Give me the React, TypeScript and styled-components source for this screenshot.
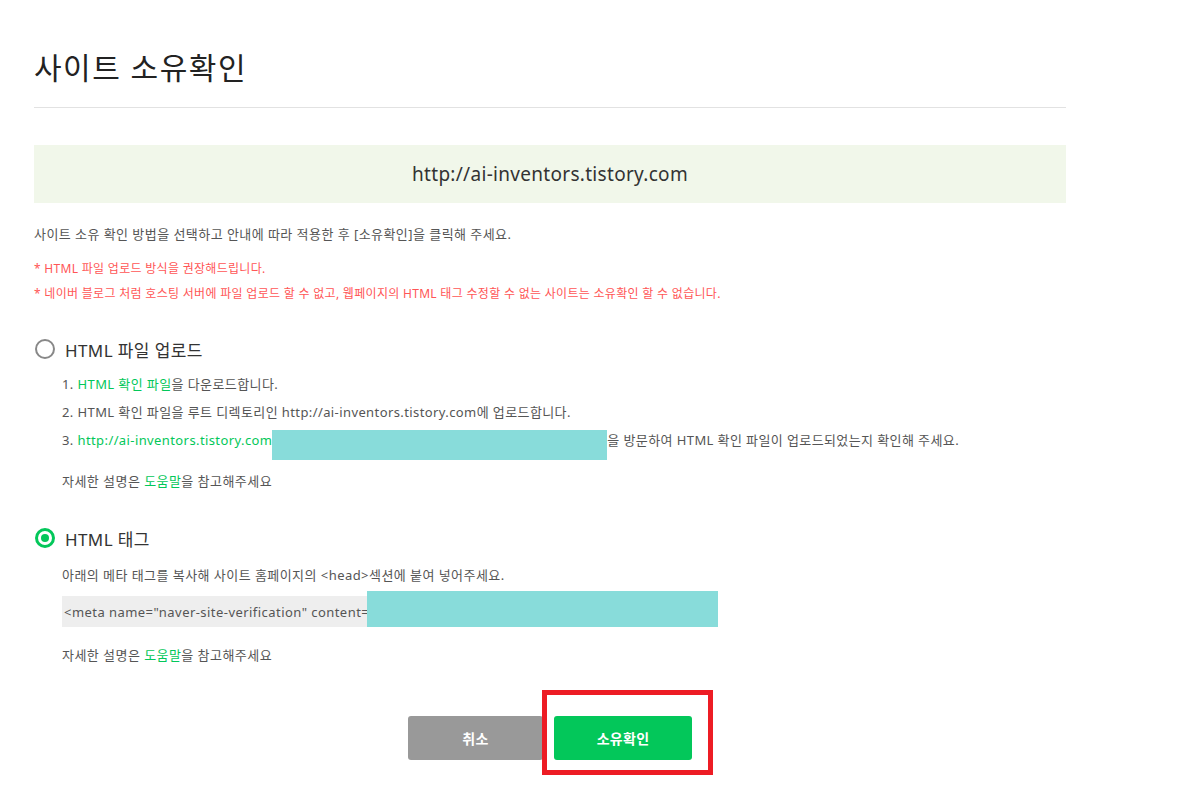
import React from "react";
import styled, { createGlobalStyle } from "styled-components";

const FONT = `"Noto Sans", "Noto Sans CJK KR", sans-serif`;

const Global = createGlobalStyle`
  html, body { margin: 0; padding: 0; background: #fff; }
  body { font-family: ${FONT}; color: #555; }
  * { box-sizing: border-box; }
`;

const Page = styled.div`
  width: 1100px;
  padding: 48px 34px 40px 34px;
`;

const Title = styled.h1`
  margin: 0;
  font-size: 30px;
  line-height: 40px;
  font-weight: 400;
  color: #222;
  letter-spacing: 1.5px;
  padding-bottom: 19px;
  border-bottom: 1px solid #e2e2e2;
`;

const UrlBox = styled.div`
  margin-top: 37px;
  height: 58px;
  background: #f1f7ea;
  display: flex;
  align-items: center;
  justify-content: center;
  font-size: 19px;
  color: #333;
  font-weight: 400;
  letter-spacing: 0.3px;
`;

const Desc = styled.p`
  margin: 21px 0 0;
  font-size: 13px;
  line-height: 20px;
  letter-spacing: 0.45px;
  color: #555;
`;

const Notes = styled.ul`
  list-style: none;
  margin: 12px 0 0;
  padding: 0;
`;

const Note = styled.li`
  font-size: 12px;
  line-height: 25px;
  color: #ff5656;
  letter-spacing: 0.3px;
`;

const Section = styled.section<{ $gap: number }>`
  margin-top: ${(p) => p.$gap}px;
`;

const RadioRow = styled.label`
  display: flex;
  align-items: center;
  gap: 10px;
  height: 24px;
  padding-left: 1px;
  font-size: 17px;
  color: #333;
  letter-spacing: 0.4px;
`;

const Radio = styled.span<{ $checked?: boolean }>`
  width: 20px;
  height: 20px;
  border-radius: 50%;
  border: ${(p) => (p.$checked ? "3px solid #03c75a" : "2px solid #888")};
  display: flex;
  align-items: center;
  justify-content: center;
  flex: none;
  &::after {
    content: "";
    display: ${(p) => (p.$checked ? "block" : "none")};
    width: 8px;
    height: 8px;
    border-radius: 50%;
    background: #03c75a;
  }
`;

const Body = styled.div`
  padding-left: 28px;
`;

const Steps = styled.ol`
  list-style: none;
  margin: 9px 0 0;
  padding: 0;
`;

const Step = styled.li`
  font-size: 13px;
  line-height: 28px;
  letter-spacing: 0.4px;
  color: #555;
  white-space: nowrap;
`;

const Link = styled.a`
  color: #03c75a;
  text-decoration: none;
`;

const Redact = styled.span<{ $w: number }>`
  display: inline-block;
  width: ${(p) => p.$w}px;
  height: 30px;
  margin-bottom: -15px;
  background: #88dcda;
`;

const Help = styled.p<{ $gap: number; $lh: number }>`
  margin: ${(p) => p.$gap}px 0 0;
  font-size: 13px;
  line-height: ${(p) => p.$lh}px;
  letter-spacing: 0.45px;
  color: #555;
`;

const Text = styled.p`
  margin: 15px 0 0;
  font-size: 13px;
  line-height: 20px;
  letter-spacing: 0.45px;
  color: #555;
`;

const CodeBox = styled.div`
  position: relative;
  margin-top: 11px;
  width: 650px;
  height: 31px;
  background: #eeeeee;
  display: flex;
  align-items: center;
  padding-left: 2px;
  font-size: 13px;
  letter-spacing: 0.45px;
  color: #555;
  white-space: nowrap;
`;

const CodeRedact = styled.span`
  position: absolute;
  left: 305px;
  top: -5px;
  width: 351px;
  height: 36px;
  background: #88dcda;
`;

const Buttons = styled.div`
  margin-top: 51px;
  display: flex;
  justify-content: center;
  gap: 11px;
  width: 1032px;
`;

const Button = styled.button<{ $primary?: boolean }>`
  width: ${(p) => (p.$primary ? 138 : 135)}px;
  height: 44px;
  border: none;
  border-radius: 3px;
  background: ${(p) => (p.$primary ? "#03c75a" : "#999999")};
  color: #fff;
  font-family: ${FONT};
  font-size: 14px;
  font-weight: 700;
  letter-spacing: 0.3px;
  cursor: pointer;
`;

const Highlight = styled.div`
  position: relative;
  &::after {
    content: "";
    position: absolute;
    left: -12px;
    top: -26px;
    right: -21px;
    bottom: -15px;
    border: 5px solid #ed1c24;
    pointer-events: none;
  }
`;

export default function App() {
  const url = "http://ai-inventors.tistory.com";
  return (
    <>
      <Global />
      <Page>
        <Title>사이트 소유확인</Title>
        <UrlBox>{url}</UrlBox>
        <Desc>사이트 소유 확인 방법을 선택하고 안내에 따라 적용한 후 [소유확인]을 클릭해 주세요.</Desc>
        <Notes>
          <Note>* HTML 파일 업로드 방식을 권장해드립니다.</Note>
          <Note>
            * 네이버 블로그 처럼 호스팅 서버에 파일 업로드 할 수 없고, 웹페이지의 HTML 태그 수정할 수 없는 사이트는 소유확인 할 수 없습니다.
          </Note>
        </Notes>

        <Section $gap={31}>
          <RadioRow>
            <Radio />
            HTML 파일 업로드
          </RadioRow>
          <Body>
            <Steps>
              <Step>
                1. <Link>HTML 확인 파일</Link>을 다운로드합니다.
              </Step>
              <Step>2. HTML 확인 파일을 루트 디렉토리인 {url}에 업로드합니다.</Step>
              <Step>
                3. <Link>{url}</Link>
                <Redact $w={335} />을 방문하여 HTML 확인 파일이 업로드되었는지 확인해 주세요.
              </Step>
            </Steps>
            <Help $gap={13} $lh={28}>
              자세한 설명은 <Link>도움말</Link>을 참고해주세요
            </Help>
          </Body>
        </Section>

        <Section $gap={31}>
          <RadioRow>
            <Radio $checked />
            HTML 태그
          </RadioRow>
          <Body>
            <Text>아래의 메타 태그를 복사해 사이트 홈페이지의 &lt;head&gt;섹션에 붙여 넣어주세요.</Text>
            <CodeBox>
              &lt;meta name="naver-site-verification" content=
              <CodeRedact />
            </CodeBox>
            <Help $gap={18} $lh={20}>
              자세한 설명은 <Link>도움말</Link>을 참고해주세요
            </Help>
          </Body>
        </Section>

        <Buttons>
          <Button>취소</Button>
          <Highlight>
            <Button $primary>소유확인</Button>
          </Highlight>
        </Buttons>
      </Page>
    </>
  );
}
